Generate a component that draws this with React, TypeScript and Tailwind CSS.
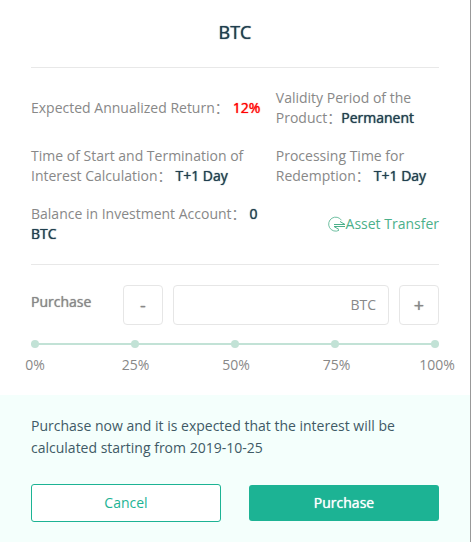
import React, { useState } from "react";

const marks = [0, 25, 50, 75, 100];

const details = [
  { label: "Expected Annualized Return", value: "12%", color: "text-[#ff0000] ml-1" },
  { label: "Validity Period of the Product", value: "Permanent", color: "text-[#1f3f4f]" },
  { label: "Time of Start and Termination of Interest Calculation", value: "T+1 Day", color: "text-[#1f3f4f] ml-1" },
  { label: "Processing Time for Redemption", value: "T+1 Day", color: "text-[#1f3f4f] ml-1" },
  { label: "Balance in Investment Account", value: "0 BTC", color: "text-[#1f3f4f] ml-1" },
];

const TransferIcon = () => (
  <svg
    className="h-4 w-[18px]"
    viewBox="0 0 18 16"
    fill="none"
    stroke="currentColor"
    aria-hidden="true"
  >
    <path d="M13.5 4.3A7 7 0 1 0 11 14.3" strokeWidth="0.8" />
    <path d="M6 8.5h11l-5-3M17 10.5H6l5 3" strokeWidth="1" />
  </svg>
);

const App = () => {
  const [percent, setPercent] = useState(0);
  const [amount, setAmount] = useState("");

  return (
    <div className="flex min-h-screen flex-col border-r border-[#999999] bg-white font-['Open_Sans','Noto_Sans_CJK_SC',sans-serif] text-sm leading-5 text-[#888888]">
      <div className="px-[31px]">
        <h1 className="border-b border-[#e8e8e8] pt-5 pb-[23px] text-center text-lg leading-6 text-[#1f3f4f] [text-shadow:0_0_1px_currentColor]">
          BTC
        </h1>

        <div className="grid grid-cols-[3fr_2fr] items-center gap-y-[18px] border-b border-[#e8e8e8] py-5">
          {details.map((item) => (
            <div key={item.label}>
              {`${item.label}：`}
              <span className={`[text-shadow:0_0_1px_currentColor] ${item.color}`}>
                {item.value}
              </span>
            </div>
          ))}
          <a
            href="#transfer"
            className="flex items-center justify-end whitespace-nowrap text-[#4bb08a]"
          >
            <TransferIcon />
            Asset Transfer
          </a>
        </div>

        <div className="flex pt-5">
          <label
            htmlFor="amount"
            className="w-[92px] pt-[7px] [text-shadow:0_0_1px_currentColor]"
          >
            Purchase
          </label>
          <button
            type="button"
            aria-label="Decrease"
            className="h-10 w-10 rounded border border-[#e6e6e6] text-lg [text-shadow:0_0_1px_currentColor]"
            onClick={() => setPercent(Math.max(0, percent - 25))}
          >
            -
          </button>
          <div className="mx-2.5 flex h-10 min-w-0 flex-1 items-center rounded border border-[#e6e6e6] px-3">
            <input
              id="amount"
              type="text"
              value={amount}
              onChange={(e) => setAmount(e.target.value)}
              className="min-w-0 flex-1 outline-none"
            />
            <span>BTC</span>
          </div>
          <button
            type="button"
            aria-label="Increase"
            className="h-10 w-10 rounded border border-[#e6e6e6] text-lg [text-shadow:0_0_1px_currentColor]"
            onClick={() => setPercent(Math.min(100, percent + 25))}
          >
            +
          </button>
        </div>

        <div className="relative mt-[15px] flex h-2 items-center">
          <div className="h-0.5 flex-1 bg-[#c2e2d6]"></div>
          <div className="absolute inset-0 flex justify-between">
            {marks.map((mark) => (
              <span key={mark} className="h-2 w-2 rounded-full bg-[#c2e2d6]"></span>
            ))}
          </div>
          <input
            type="range"
            aria-label="Purchase percentage"
            min={0}
            max={100}
            value={percent}
            onChange={(e) => setPercent(Number(e.target.value))}
            className="absolute inset-0 w-full cursor-pointer opacity-0"
          />
        </div>
        <div className="-mr-0.5 flex justify-between pt-[7px] pb-5">
          {marks.map((mark) => (
            <span key={mark} className="flex w-2 justify-center">
              <span>{mark}%</span>
            </span>
          ))}
        </div>
      </div>

      <div className="flex-1 bg-[#f4fffc] px-[31px] pt-5 pb-5">
        <p className="leading-[22px] text-[#3f5a66]">
          Purchase now and it is expected that the interest will be calculated
          starting from 2019-10-25
        </p>
        <div className="mt-[25px] grid grid-cols-2 items-center gap-7">
          <button
            type="button"
            className="h-[38px] rounded-[3px] border border-[#1cb394] bg-white text-[#1cb394]"
          >
            Cancel
          </button>
          <button
            type="button"
            className="h-9 rounded-[3px] bg-[#1cb394] text-white [text-shadow:0_0_1px_currentColor]"
          >
            Purchase
          </button>
        </div>
      </div>
    </div>
  );
};

export default App;
